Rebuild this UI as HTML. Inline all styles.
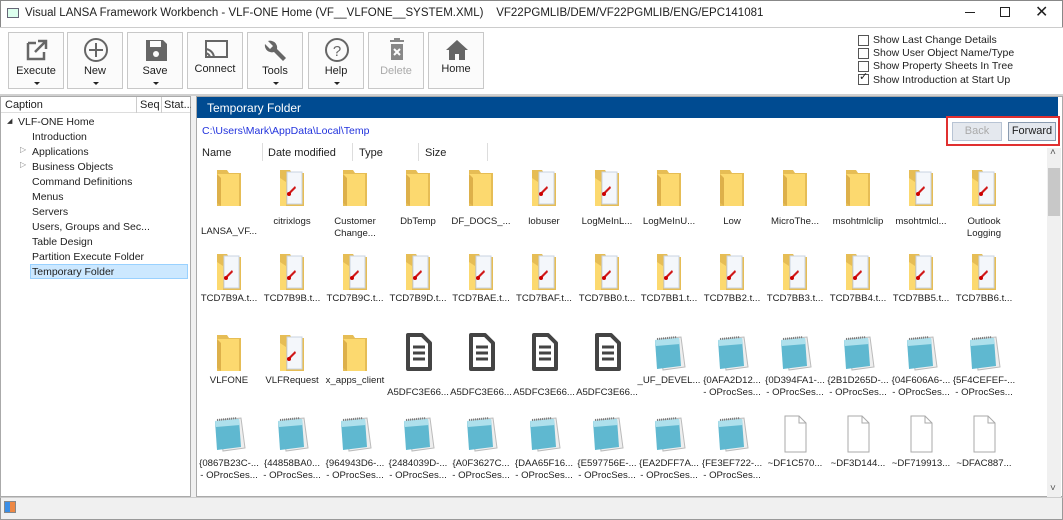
<!DOCTYPE html>
<html><head><meta charset="utf-8"><style>
*{margin:0;padding:0;box-sizing:border-box}
body{width:1063px;height:520px;overflow:hidden;background:#fff;font-family:"Liberation Sans",sans-serif;font-size:11px;color:#1e1e1e;position:relative}
.a{position:absolute}
.btn{position:absolute;top:32px;width:56px;height:57px;border:1px solid #c8c8c8;background:#fbfbfb;text-align:center;font-size:11px}
.btn svg{position:absolute;left:15px;top:4px}
.btn .l{position:absolute;left:0;right:0;top:32px}
.btn .c{position:absolute;left:25px;top:49px;width:0;height:0;border-left:3px solid transparent;border-right:3px solid transparent;border-top:3px solid #222}
.tr{position:absolute;left:32px;font-size:10.5px}
.it{position:absolute;width:64px;text-align:center;font-size:9.6px;line-height:12px;white-space:nowrap;overflow:hidden}
.it svg{display:block;margin:0 auto}
.cb{position:absolute;left:858px;width:11px;height:11px;border:1px solid #555;background:#fff}
.cl{position:absolute;left:873px;font-size:10.5px}
</style></head><body>
<svg width="0" height="0" style="position:absolute"><defs>
<g id="fo"><path d="M8 4h10l2 3h12v33H8z" fill="#e6bd55"/><path d="M8 8h22v32H12l-4-3z" fill="#fcd96f"/><path d="M8 8l4 4v28l-4-3z" fill="#ddb04a"/></g>
<g id="tc"><path d="M8 4h10l2 3h12v33H8z" fill="#e6bd55"/><rect x="15" y="6" width="15" height="32" fill="#f4f7fb" stroke="#c9d3e0"/><path d="M8 12l6 4v24H8z" fill="#fcd96f"/><path d="M17 26l6-6 1 2-6 6z" fill="#d01818"/><circle cx="17" cy="28" r="2" fill="#c00"/></g>
<g id="dc"><path d="M10 4h14l8 8v26H10z" fill="#fff" stroke="#444" stroke-width="4" stroke-linejoin="round"/><path d="M15 16h12M15 22h12M15 28h12" stroke="#444" stroke-width="3"/></g>
<g id="nt"><path d="M10 8l22-2 4 30-22 3z" fill="#eee" stroke="#bbb"/><path d="M6 9l24-2 2 28-24 3z" fill="#5fb8d0"/><path d="M6 9l24-2 1 6-24 2z" fill="#aee0ec"/><path d="M8 8l20-2" stroke="#777" stroke-width="2" stroke-dasharray="1 1"/></g>
<g id="bl"><path d="M10 4h14l7 7v29H10z" fill="#fff" stroke="#aaa"/><path d="M24 4v7h7" fill="none" stroke="#aaa"/></g>
</defs></svg>

<!-- title -->
<div class="a" style="left:0;top:0;width:1063px;height:27px;background:#fff;border:1px solid #888;border-bottom:none"></div>
<div class="a" style="left:7px;top:8px;width:12px;height:10px;border:1px solid #667;background:#dfe"></div>
<div class="a" style="left:25px;top:7px;font-size:11.5px">Visual LANSA Framework Workbench - VLF-ONE Home (VF__VLFONE__SYSTEM.XML)&nbsp;&nbsp;&nbsp; VF22PGMLIB/DEM/VF22PGMLIB/ENG/EPC141081</div>
<div class="a" style="left:965px;top:12px;width:10px;height:1px;background:#222"></div>
<div class="a" style="left:1000px;top:7px;width:10px;height:10px;border:1px solid #222"></div>
<div class="a" style="left:1035px;top:2px;font-size:16px">✕</div>
<div class="a" style="left:0;top:27px;width:1063px;height:1px;background:#ccc"></div>

<!-- toolbar -->
<div class="btn" style="left:8px"><svg width="26" height="26"><path d="M4 6v16h16v-7M4 6h8M14 4h8v8M22 4L11 15" fill="none" stroke="#666" stroke-width="2.5"/></svg><div class="l">Execute</div><div class="c"></div></div>
<div class="btn" style="left:67px"><svg width="26" height="26"><circle cx="13" cy="13" r="11" fill="none" stroke="#666" stroke-width="2"/><path d="M13 6v14M6 13h14" stroke="#666" stroke-width="2"/></svg><div class="l">New</div><div class="c"></div></div>
<div class="btn" style="left:127px"><svg width="26" height="26"><path d="M3 3h17l4 4v17H3z" fill="#666"/><rect x="7" y="4" width="11" height="6" fill="#fbfbfb"/><circle cx="13" cy="17" r="3" fill="#fbfbfb"/></svg><div class="l">Save</div><div class="c"></div></div>
<div class="btn" style="left:187px"><svg width="26" height="26"><rect x="3" y="4" width="21" height="16" fill="none" stroke="#666" stroke-width="2"/><path d="M2 12a9 9 0 0 1 9 9M2 16a5 5 0 0 1 5 5" fill="none" stroke="#666" stroke-width="2"/></svg><div class="l" style="top:30px">Connect</div></div>
<div class="btn" style="left:247px"><svg width="26" height="26"><path d="M5 4l5 5-3 3-5-5a7 7 0 0 0 9 8l9 9 3-3-9-9a7 7 0 0 0-9-8z" fill="#666"/></svg><div class="l">Tools</div><div class="c"></div></div>
<div class="btn" style="left:308px"><svg width="26" height="26"><circle cx="13" cy="13" r="11" fill="none" stroke="#666" stroke-width="2"/><text x="13" y="19" font-size="15" text-anchor="middle" fill="#666" font-family="Liberation Sans">?</text></svg><div class="l">Help</div><div class="c"></div></div>
<div class="btn" style="left:368px;color:#aaa"><svg width="26" height="26"><path d="M6 4h14M10 2h6" stroke="#888" stroke-width="2"/><rect x="7" y="7" width="12" height="16" fill="#888"/><path d="M10 12l6 6M16 12l-6 6" stroke="#fff" stroke-width="2"/></svg><div class="l">Delete</div></div>
<div class="btn" style="left:428px"><svg width="26" height="26"><path d="M13 3L2 13h3v10h6v-6h4v6h6V13h3z" fill="#666"/></svg><div class="l" style="top:30px">Home</div></div>

<div class="cb" style="top:35px"></div><div class="cl" style="top:34px">Show Last Change Details</div>
<div class="cb" style="top:48px"></div><div class="cl" style="top:47px">Show User Object Name/Type</div>
<div class="cb" style="top:61px"></div><div class="cl" style="top:60px">Show Property Sheets In Tree</div>
<div class="cb" style="top:74px"></div><div class="a" style="left:859px;top:70px;font-size:11px">✓</div><div class="cl" style="top:74px">Show Introduction at Start Up</div>
<div class="a" style="left:0;top:94px;width:1063px;height:2px;background:#d0d0d0"></div>

<!-- left panel -->
<div class="a" style="left:0;top:96px;width:191px;height:401px;border:1px solid #aaa;background:#fff"></div>
<div class="a" style="left:1px;top:97px;width:189px;height:16px;border-bottom:1px solid #ddd"></div>
<div class="a" style="left:5px;top:99px">Caption</div>
<div class="a" style="left:136px;top:97px;width:1px;height:16px;background:#ccc"></div>
<div class="a" style="left:140px;top:99px">Seq</div>
<div class="a" style="left:161px;top:97px;width:1px;height:16px;background:#ccc"></div>
<div class="a" style="left:164px;top:99px">Stat...</div>
<div class="a" style="left:7px;top:117px;font-size:7px;color:#333">◢</div>
<div class="a" style="left:18px;top:116px;font-size:10.5px">VLF-ONE Home</div>
<div class="tr" style="top:131px">Introduction</div>
<div class="a" style="left:20px;top:145px;font-size:8px;color:#888">▷</div>
<div class="tr" style="top:146px">Applications</div>
<div class="a" style="left:20px;top:160px;font-size:8px;color:#888">▷</div>
<div class="tr" style="top:161px">Business Objects</div>
<div class="tr" style="top:176px">Command Definitions</div>
<div class="tr" style="top:191px">Menus</div>
<div class="tr" style="top:206px">Servers</div>
<div class="tr" style="top:221px">Users, Groups and Sec...</div>
<div class="tr" style="top:236px">Table Design</div>
<div class="tr" style="top:251px">Partition Execute Folder</div>
<div class="a" style="left:30px;top:264px;width:158px;height:15px;background:#cce8ff;border:1px solid #99d1ff"></div>
<div class="tr" style="top:266px">Temporary Folder</div>
<div class="a" style="left:191px;top:96px;width:5px;height:401px;background:#f0f0f0"></div>

<!-- right panel -->
<div class="a" style="left:196px;top:96px;width:867px;height:401px;border:1px solid #aaa"></div>
<div class="a" style="left:197px;top:97px;width:861px;height:21px;background:#004b91"></div>
<div class="a" style="left:207px;top:101px;color:#fff;font-size:12px">Temporary Folder</div>
<div class="a" style="left:202px;top:125px;color:#2233dd;font-size:10.5px">C:\Users\Mark\AppData\Local\Temp</div>
<div class="a" style="left:946px;top:116px;width:114px;height:30px;border:2px solid #e03030"></div>
<div class="a" style="left:952px;top:122px;width:50px;height:19px;border:1px solid #b8c4d4;background:#e4e8ee;color:#aaa;text-align:center;line-height:17px">Back</div>
<div class="a" style="left:1008px;top:122px;width:48px;height:19px;border:1px solid #8a9bb0;background:#e4e8ee;text-align:center;line-height:17px">Forward</div>
<div class="a" style="left:202px;top:147px">Name</div>
<div class="a" style="left:262px;top:143px;width:1px;height:18px;background:#ddd"></div>
<div class="a" style="left:268px;top:147px">Date modified</div>
<div class="a" style="left:352px;top:143px;width:1px;height:18px;background:#ddd"></div>
<div class="a" style="left:359px;top:147px">Type</div>
<div class="a" style="left:418px;top:143px;width:1px;height:18px;background:#ddd"></div>
<div class="a" style="left:425px;top:147px">Size</div>
<div class="a" style="left:487px;top:143px;width:1px;height:18px;background:#ddd"></div>
<div class="a" style="left:1047px;top:148px;width:14px;height:349px;background:#f0f0f0"></div>
<div class="a" style="left:1048px;top:168px;width:12px;height:48px;background:#c8c8c8"></div>
<div class="a" style="left:1050px;top:147px;font-size:10px;color:#555">˄</div>
<div class="a" style="left:1050px;top:483px;font-size:10px;color:#555">˅</div>

<!-- row1 -->
<div class="it" style="left:197px;top:166px"><svg width="40" height="44"><use href="#fo"/></svg><div style="margin-top:16px">LANSA_VF...</div></div>
<div class="it" style="left:260px;top:166px"><svg width="40" height="44"><use href="#tc"/></svg><div style="margin-top:6px">citrixlogs</div></div>
<div class="it" style="left:323px;top:166px"><svg width="40" height="44"><use href="#fo"/></svg><div style="margin-top:6px">Customer<br>Change...</div></div>
<div class="it" style="left:386px;top:166px"><svg width="40" height="44"><use href="#fo"/></svg><div style="margin-top:6px">DbTemp</div></div>
<div class="it" style="left:449px;top:166px"><svg width="40" height="44"><use href="#fo"/></svg><div style="margin-top:6px">DF_DOCS_...</div></div>
<div class="it" style="left:512px;top:166px"><svg width="40" height="44"><use href="#tc"/></svg><div style="margin-top:6px">lobuser</div></div>
<div class="it" style="left:575px;top:166px"><svg width="40" height="44"><use href="#tc"/></svg><div style="margin-top:6px">LogMeInL...</div></div>
<div class="it" style="left:637px;top:166px"><svg width="40" height="44"><use href="#fo"/></svg><div style="margin-top:6px">LogMeInU...</div></div>
<div class="it" style="left:700px;top:166px"><svg width="40" height="44"><use href="#fo"/></svg><div style="margin-top:6px">Low</div></div>
<div class="it" style="left:763px;top:166px"><svg width="40" height="44"><use href="#fo"/></svg><div style="margin-top:6px">MicroThe...</div></div>
<div class="it" style="left:826px;top:166px"><svg width="40" height="44"><use href="#fo"/></svg><div style="margin-top:6px">msohtmlclip</div></div>
<div class="it" style="left:889px;top:166px"><svg width="40" height="44"><use href="#tc"/></svg><div style="margin-top:6px">msohtmlcl...</div></div>
<div class="it" style="left:952px;top:166px"><svg width="40" height="44"><use href="#tc"/></svg><div style="margin-top:6px">Outlook<br>Logging</div></div>

<!-- row2 -->
<div class="it" style="left:197px;top:250px"><svg width="40" height="44"><use href="#tc"/></svg><div style="margin-top:-1px">TCD7B9A.t...</div></div>
<div class="it" style="left:260px;top:250px"><svg width="40" height="44"><use href="#tc"/></svg><div style="margin-top:-1px">TCD7B9B.t...</div></div>
<div class="it" style="left:323px;top:250px"><svg width="40" height="44"><use href="#tc"/></svg><div style="margin-top:-1px">TCD7B9C.t...</div></div>
<div class="it" style="left:386px;top:250px"><svg width="40" height="44"><use href="#tc"/></svg><div style="margin-top:-1px">TCD7B9D.t...</div></div>
<div class="it" style="left:449px;top:250px"><svg width="40" height="44"><use href="#tc"/></svg><div style="margin-top:-1px">TCD7BAE.t...</div></div>
<div class="it" style="left:512px;top:250px"><svg width="40" height="44"><use href="#tc"/></svg><div style="margin-top:-1px">TCD7BAF.t...</div></div>
<div class="it" style="left:575px;top:250px"><svg width="40" height="44"><use href="#tc"/></svg><div style="margin-top:-1px">TCD7BB0.t...</div></div>
<div class="it" style="left:637px;top:250px"><svg width="40" height="44"><use href="#tc"/></svg><div style="margin-top:-1px">TCD7BB1.t...</div></div>
<div class="it" style="left:700px;top:250px"><svg width="40" height="44"><use href="#tc"/></svg><div style="margin-top:-1px">TCD7BB2.t...</div></div>
<div class="it" style="left:763px;top:250px"><svg width="40" height="44"><use href="#tc"/></svg><div style="margin-top:-1px">TCD7BB3.t...</div></div>
<div class="it" style="left:826px;top:250px"><svg width="40" height="44"><use href="#tc"/></svg><div style="margin-top:-1px">TCD7BB4.t...</div></div>
<div class="it" style="left:889px;top:250px"><svg width="40" height="44"><use href="#tc"/></svg><div style="margin-top:-1px">TCD7BB5.t...</div></div>
<div class="it" style="left:952px;top:250px"><svg width="40" height="44"><use href="#tc"/></svg><div style="margin-top:-1px">TCD7BB6.t...</div></div>

<!-- row3 -->
<div class="it" style="left:197px;top:331px"><svg width="40" height="44"><use href="#fo"/></svg><div style="margin-top:0">VLFONE</div></div>
<div class="it" style="left:260px;top:331px"><svg width="40" height="44"><use href="#tc"/></svg><div style="margin-top:0">VLFRequest</div></div>
<div class="it" style="left:323px;top:331px"><svg width="40" height="44"><use href="#fo"/></svg><div style="margin-top:0">x_apps_client</div></div>
<div class="it" style="left:386px;top:331px"><svg width="40" height="44"><use href="#dc"/></svg><div style="margin-top:12px">A5DFC3E66...</div></div>
<div class="it" style="left:449px;top:331px"><svg width="40" height="44"><use href="#dc"/></svg><div style="margin-top:12px">A5DFC3E66...</div></div>
<div class="it" style="left:512px;top:331px"><svg width="40" height="44"><use href="#dc"/></svg><div style="margin-top:12px">A5DFC3E66...</div></div>
<div class="it" style="left:575px;top:331px"><svg width="40" height="44"><use href="#dc"/></svg><div style="margin-top:12px">A5DFC3E66...</div></div>
<div class="it" style="left:637px;top:331px"><svg width="40" height="44"><use href="#nt"/></svg><div style="margin-top:0">_UF_DEVEL...</div></div>
<div class="it" style="left:700px;top:331px"><svg width="40" height="44"><use href="#nt"/></svg><div style="margin-top:0">{0AFA2D12...<br>- OProcSes...</div></div>
<div class="it" style="left:763px;top:331px"><svg width="40" height="44"><use href="#nt"/></svg><div style="margin-top:0">{0D394FA1-...<br>- OProcSes...</div></div>
<div class="it" style="left:826px;top:331px"><svg width="40" height="44"><use href="#nt"/></svg><div style="margin-top:0">{2B1D265D-...<br>- OProcSes...</div></div>
<div class="it" style="left:889px;top:331px"><svg width="40" height="44"><use href="#nt"/></svg><div style="margin-top:0">{04F606A6-...<br>- OProcSes...</div></div>
<div class="it" style="left:952px;top:331px"><svg width="40" height="44"><use href="#nt"/></svg><div style="margin-top:0">{5F4CEFEF-...<br>- OProcSes...</div></div>

<!-- row4 -->
<div class="it" style="left:197px;top:412px"><svg width="40" height="44"><use href="#nt"/></svg><div style="margin-top:2px">{0867B23C-...<br>- OProcSes...</div></div>
<div class="it" style="left:260px;top:412px"><svg width="40" height="44"><use href="#nt"/></svg><div style="margin-top:2px">{44858BA0...<br>- OProcSes...</div></div>
<div class="it" style="left:323px;top:412px"><svg width="40" height="44"><use href="#nt"/></svg><div style="margin-top:2px">{964943D6-...<br>- OProcSes...</div></div>
<div class="it" style="left:386px;top:412px"><svg width="40" height="44"><use href="#nt"/></svg><div style="margin-top:2px">{2484039D-...<br>- OProcSes...</div></div>
<div class="it" style="left:449px;top:412px"><svg width="40" height="44"><use href="#nt"/></svg><div style="margin-top:2px">{A0F3627C...<br>- OProcSes...</div></div>
<div class="it" style="left:512px;top:412px"><svg width="40" height="44"><use href="#nt"/></svg><div style="margin-top:2px">{DAA65F16...<br>- OProcSes...</div></div>
<div class="it" style="left:575px;top:412px"><svg width="40" height="44"><use href="#nt"/></svg><div style="margin-top:2px">{E597756E-...<br>- OProcSes...</div></div>
<div class="it" style="left:637px;top:412px"><svg width="40" height="44"><use href="#nt"/></svg><div style="margin-top:2px">{EA2DFF7A...<br>- OProcSes...</div></div>
<div class="it" style="left:700px;top:412px"><svg width="40" height="44"><use href="#nt"/></svg><div style="margin-top:2px">{FE3EF722-...<br>- OProcSes...</div></div>
<div class="it" style="left:763px;top:412px"><svg width="40" height="44"><use href="#bl"/></svg><div style="margin-top:2px">~DF1C570...</div></div>
<div class="it" style="left:826px;top:412px"><svg width="40" height="44"><use href="#bl"/></svg><div style="margin-top:2px">~DF3D144...</div></div>
<div class="it" style="left:889px;top:412px"><svg width="40" height="44"><use href="#bl"/></svg><div style="margin-top:2px">~DF719913...</div></div>
<div class="it" style="left:952px;top:412px"><svg width="40" height="44"><use href="#bl"/></svg><div style="margin-top:2px">~DFAC887...</div></div>

<!-- status bar -->
<div class="a" style="left:0;top:497px;width:1063px;height:23px;background:#f0f0f0;border:1px solid #999;border-top:1px solid #ccc"></div>
<div class="a" style="left:4px;top:501px;width:12px;height:12px;background:linear-gradient(90deg,#3a8ee6 50%,#e84 50%);border:1px solid #888"></div>
</body></html>
